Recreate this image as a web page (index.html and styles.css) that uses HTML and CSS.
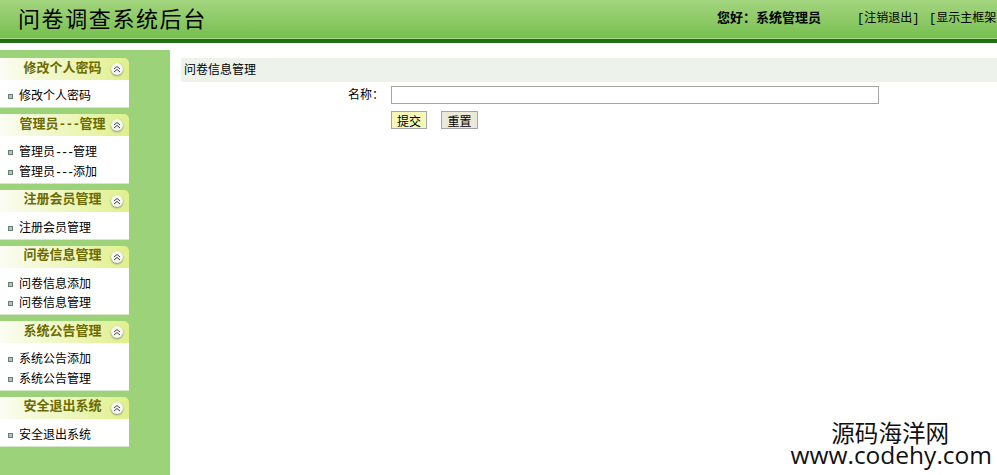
FILE: index.html
```html
<!DOCTYPE html>
<html lang="zh">
<head>
  <meta charset="UTF-8">
  <title>问卷调查系统后台</title>
  <link rel="stylesheet" href="styles.css">
</head>
<body>
  <div class="top-bar">
    <div class="site-title">问卷调查系统后台</div>
    <div class="user-info">您好：系统管理员</div>
    <div class="top-links">
      <a href="#">[注销退出]</a>
      <a href="#">[显示主框架]</a>
    </div>
  </div>

  <div class="main">
    <div class="side-menu">
      <div class="menu-box">
        <div class="menu-title"><span>修改个人密码</span><i class="fold-btn"><svg width="8" height="8" viewBox="0 0 8 8"><path d="M1 4 4 1.5 7 4M1 7 4 4.5 7 7"/></svg></i></div>
        <ul class="menu-list">
          <li>修改个人密码</li>
        </ul>
      </div>
      <div class="menu-box">
        <div class="menu-title"><span>管理员<b class="dash">---</b>管理</span><i class="fold-btn"><svg width="8" height="8" viewBox="0 0 8 8"><path d="M1 4 4 1.5 7 4M1 7 4 4.5 7 7"/></svg></i></div>
        <ul class="menu-list">
          <li>管理员<b class="dash">---</b>管理</li>
          <li>管理员<b class="dash">---</b>添加</li>
        </ul>
      </div>
      <div class="menu-box">
        <div class="menu-title"><span>注册会员管理</span><i class="fold-btn"><svg width="8" height="8" viewBox="0 0 8 8"><path d="M1 4 4 1.5 7 4M1 7 4 4.5 7 7"/></svg></i></div>
        <ul class="menu-list">
          <li>注册会员管理</li>
        </ul>
      </div>
      <div class="menu-box">
        <div class="menu-title"><span>问卷信息管理</span><i class="fold-btn"><svg width="8" height="8" viewBox="0 0 8 8"><path d="M1 4 4 1.5 7 4M1 7 4 4.5 7 7"/></svg></i></div>
        <ul class="menu-list">
          <li>问卷信息添加</li>
          <li>问卷信息管理</li>
        </ul>
      </div>
      <div class="menu-box">
        <div class="menu-title"><span>系统公告管理</span><i class="fold-btn"><svg width="8" height="8" viewBox="0 0 8 8"><path d="M1 4 4 1.5 7 4M1 7 4 4.5 7 7"/></svg></i></div>
        <ul class="menu-list">
          <li>系统公告添加</li>
          <li>系统公告管理</li>
        </ul>
      </div>
      <div class="menu-box">
        <div class="menu-title"><span>安全退出系统</span><i class="fold-btn"><svg width="8" height="8" viewBox="0 0 8 8"><path d="M1 4 4 1.5 7 4M1 7 4 4.5 7 7"/></svg></i></div>
        <ul class="menu-list">
          <li>安全退出系统</li>
        </ul>
      </div>
    </div>

    <div class="content">
      <div class="page-title">问卷信息管理</div>
      <form class="edit-form">
        <div class="form-row">
          <label class="form-label" for="name">名称：</label>
          <input class="form-input" id="name" type="text">
        </div>
        <div class="form-row form-actions">
          <button class="btn btn-submit" type="button">提交</button>
          <button class="btn btn-reset" type="button">重置</button>
        </div>
      </form>
    </div>
  </div>

  <div class="watermark">
    <div class="watermark-cn">源码海洋网</div>
    <div class="watermark-url">www.codehy.com</div>
  </div>
</body>
</html>
```

FILE: styles.css
```css
html, body {
  margin: 0;
  height: 100%;
  overflow: hidden;
}
body {
  font-family: "Liberation Sans", "Noto Sans CJK SC", sans-serif;
  font-size: 12px;
  color: #000;
  background: #fff;
}
.top-bar {
  display: flex;
  align-items: center;
  height: 33px;
  padding-bottom: 6px;
  background: linear-gradient(#a4d57f, #76bf4f);
  border-bottom: 4px solid #236f18;
  box-shadow: inset 0 -1px 0 #a6d98a;
  white-space: nowrap;
  overflow: hidden;
}
.site-title {
  margin-left: 18px;
  font-family: "Noto Sans CJK SC", sans-serif;
  font-size: 22px;
  letter-spacing: 1.6px;
}
.user-info {
  margin-left: auto;
  font-weight: bold;
  font-size: 13px;
  font-family: "Noto Sans CJK SC", sans-serif;
}
.top-links {
  display: flex;
  gap: 9.6px;
  width: 140px;
  margin-left: 36px;
  flex-shrink: 0;
  overflow: hidden;
  font-family: "Liberation Mono", "Noto Sans CJK SC", monospace;
}
.top-links a {
  color: #000;
  text-decoration: none;
  flex-shrink: 0;
}
.main {
  display: flex;
  height: 425px;
  margin-top: 7px;
}
.side-menu {
  display: flex;
  flex-direction: column;
  gap: 6px;
  width: 170px;
  padding-top: 8px;
  box-sizing: border-box;
  background: #9cd27a;
}
.menu-box {
  width: 129px;
}
.menu-title {
  display: flex;
  align-items: center;
  height: 22px;
  border-radius: 0 5px 0 0;
  background: linear-gradient(90deg, #fbfdf3, #e0f08c);
  color: #6b6b00;
  font-weight: bold;
  font-size: 13px;
  font-family: "Noto Sans CJK SC", sans-serif;
}
.menu-title span {
  flex: 1;
  margin-bottom: 6px;
  padding-left: 14px;
  text-align: center;
  white-space: nowrap;
}
.dash {
  font-family: "Liberation Mono", monospace;
  font-weight: inherit;
  letter-spacing: -1.2px;
}
.menu-title .dash {
  letter-spacing: -0.8px;
}
.fold-btn {
  display: flex;
  align-items: center;
  justify-content: center;
  width: 12px;
  height: 12px;
  margin-right: 6px;
  border-radius: 50%;
  background: #f6f6f2;
  box-shadow: 0 1px 2px #8a8a7a;
}
.fold-btn path {
  fill: none;
  stroke: #444;
  stroke-width: 1;
}
.menu-list {
  margin: 0;
  padding: 6px 0 1.5px 19px;
  list-style: none;
  background: #fff;
  border-bottom: 1px solid #d8e8cc;
}
.menu-list li {
  position: relative;
  height: 19.5px;
  line-height: 21px;
}
.menu-list li::before {
  content: "";
  position: absolute;
  left: -11px;
  top: 8px;
  width: 3px;
  height: 3px;
  border: 1px solid #66806a;
  background: #a9c1e8;
}
.content {
  flex: 1;
  padding: 8px 0 0 11px;
}
.page-title {
  height: 24px;
  line-height: 24px;
  padding-left: 3px;
  background: #edf3ea;
}
.edit-form {
  margin-top: 4px;
}
.form-row {
  display: flex;
  align-items: center;
  height: 18px;
}
.form-label {
  width: 203px;
  margin-bottom: 4px;
  text-align: right;
  flex-shrink: 0;
}
.form-input {
  width: 488px;
  height: 18px;
  margin: 0 0 0 7px;
  padding: 0;
  box-sizing: border-box;
  border: 1px solid #a5a5a5;
}
.form-actions {
  margin-top: 7px;
  padding-left: 210px;
  gap: 14px;
}
.btn {
  height: 18px;
  padding: 0;
  font-family: inherit;
  font-size: 12px;
  border: 1px solid #a5a5a5;
}
.btn-submit {
  width: 36px;
  background: #f5f8b8;
}
.btn-reset {
  width: 37px;
  background: #ece9d8;
}
.watermark {
  position: absolute;
  right: 5px;
  bottom: 8px;
  text-align: center;
  color: #111;
  line-height: 1;
}
.watermark-cn {
  margin-right: 2px;
  margin-bottom: -2px;
  font-family: "Noto Sans CJK SC", sans-serif;
  font-size: 23.6px;
}
.watermark-url {
  font-family: "Open Sans", "Noto Sans", sans-serif;
  font-size: 24.5px;
}
```
